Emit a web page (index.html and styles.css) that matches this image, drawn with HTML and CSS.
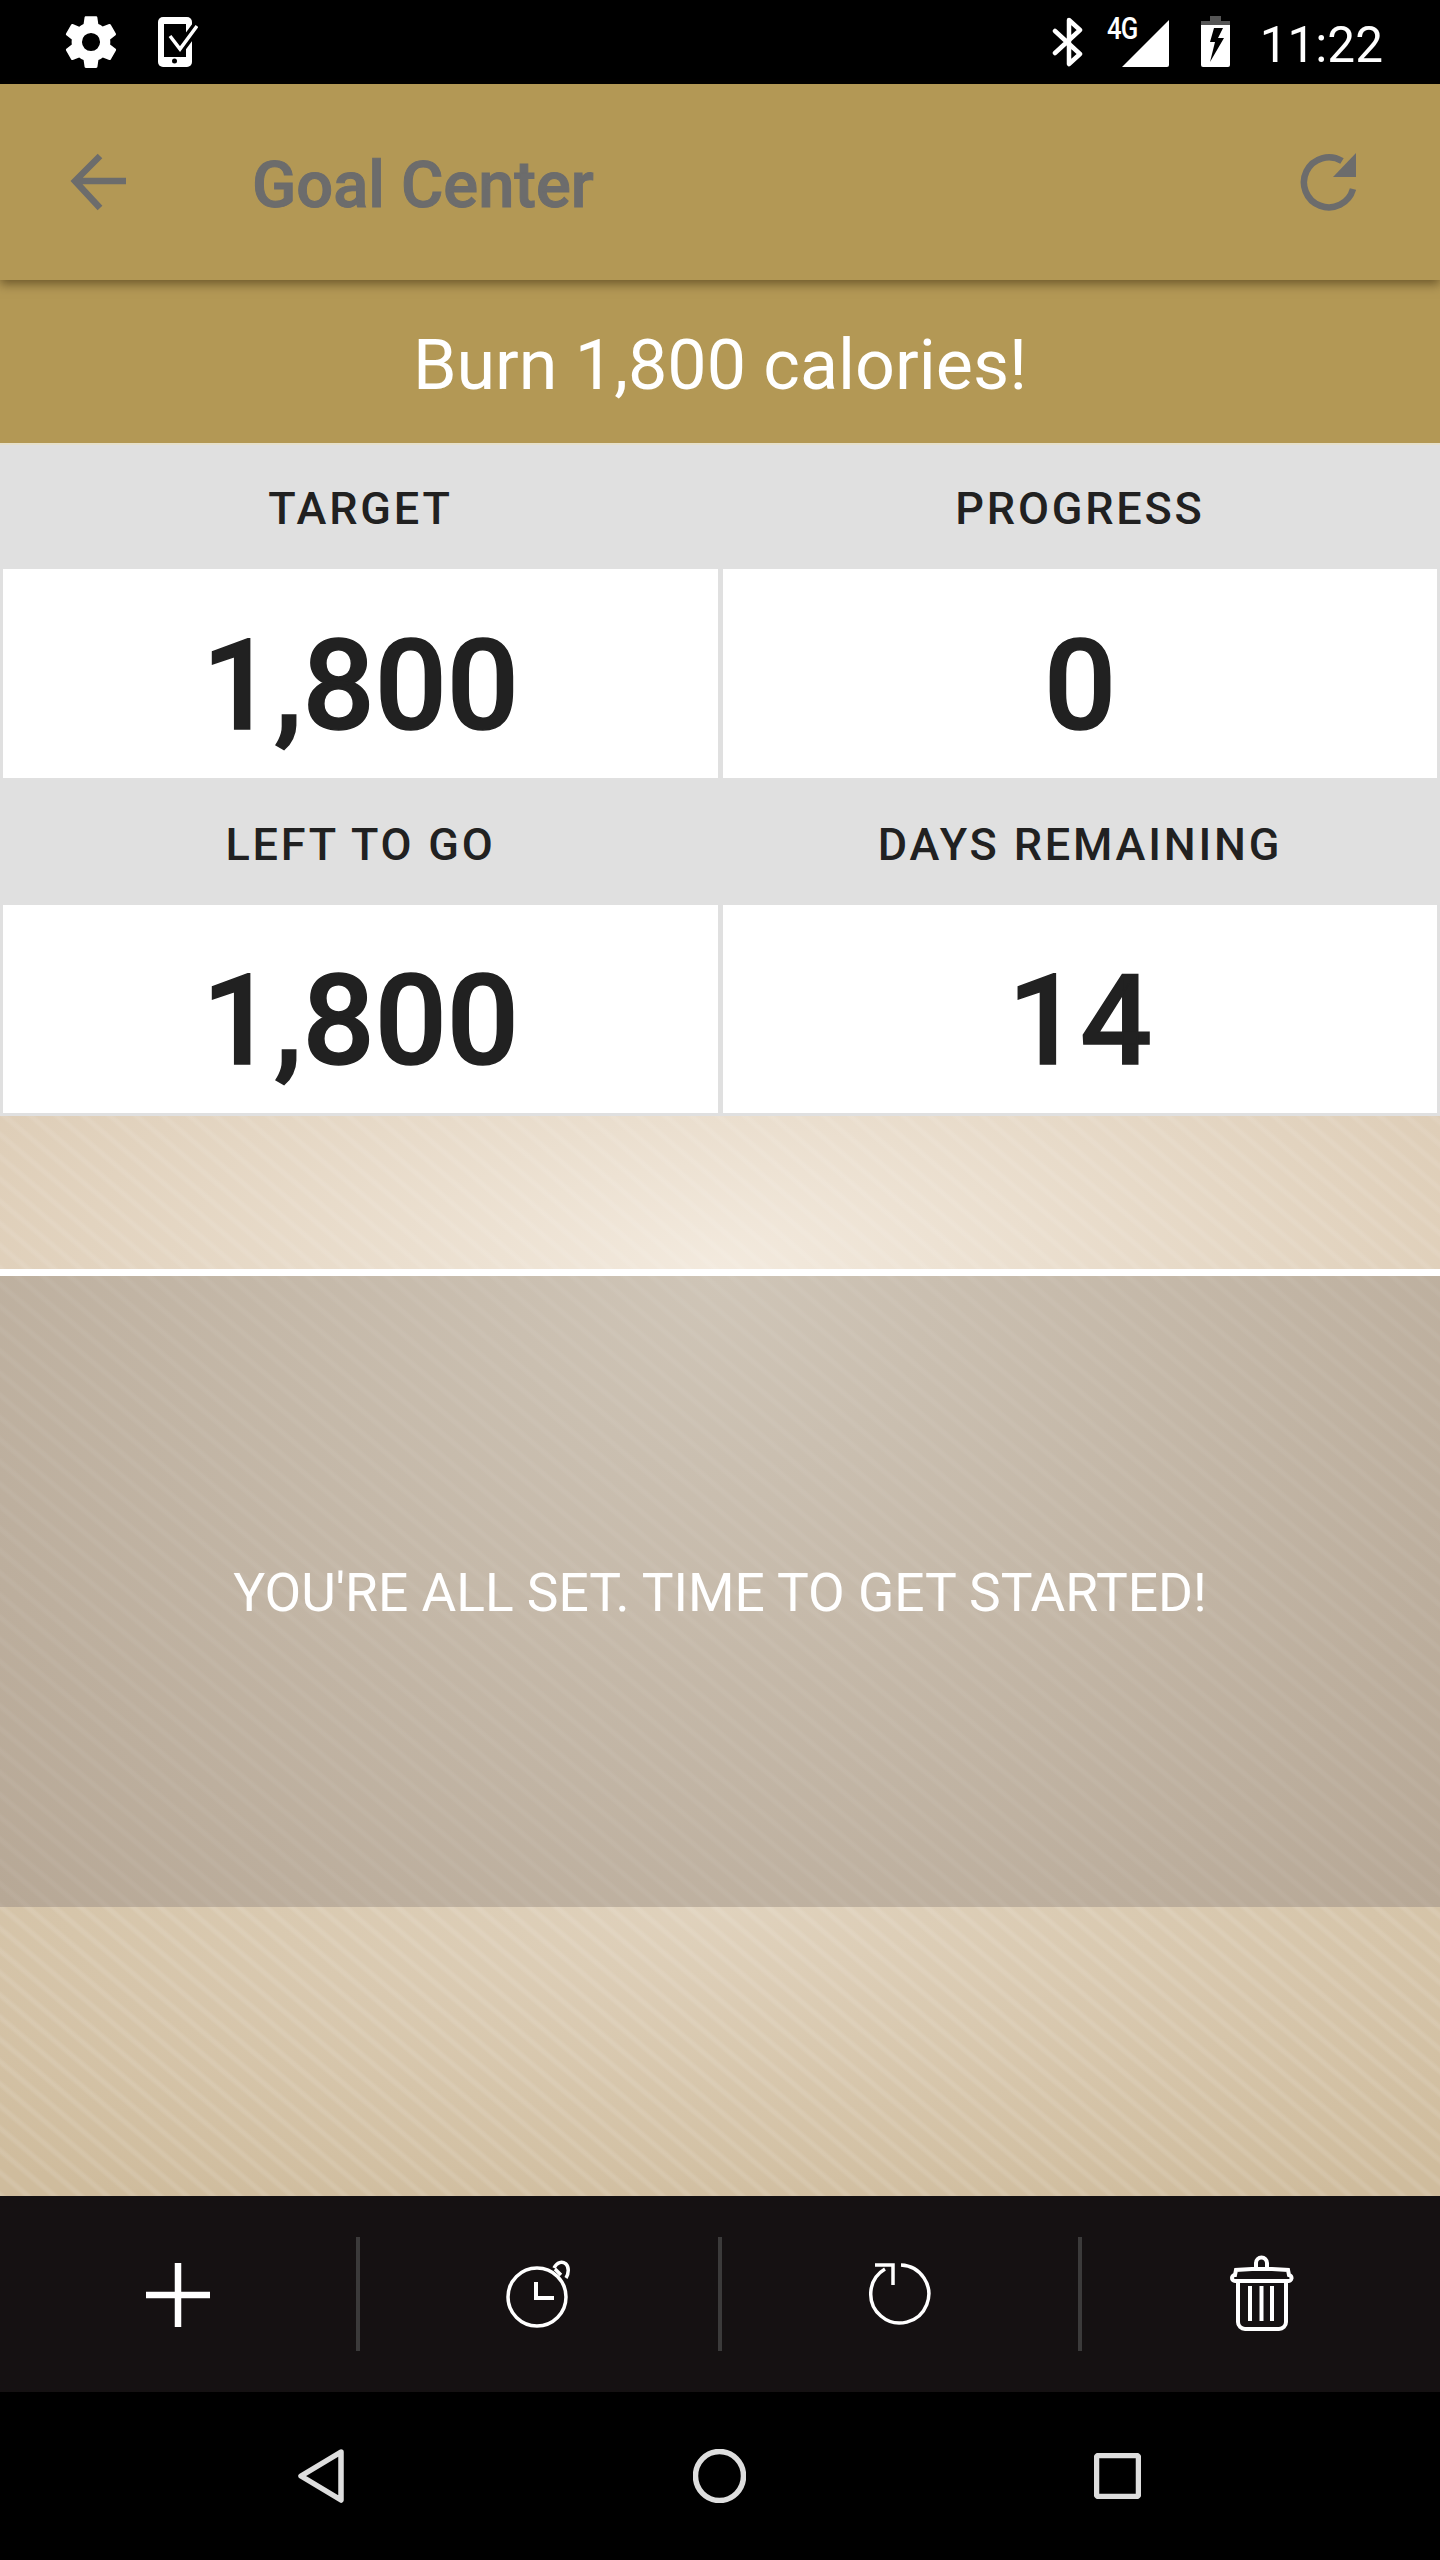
FILE: index.html
```html
<!DOCTYPE html>
<html lang="en">
<head>
    <meta charset="UTF-8">
    <meta name="viewport" content="width=device-width, initial-scale=1.0">
    <title>Goal Center</title>
    <link rel="stylesheet" href="styles.css">
</head>
<body>
    <div class="status-bar">
        <div class="status-left">
            <svg class="icon-gear" viewBox="0 0 24 24"><path fill="#fff" d="M19.4 13c.04-.32.07-.65.07-1s-.03-.68-.07-1l2.1-1.65c.19-.15.24-.42.12-.64l-2-3.46c-.12-.22-.39-.3-.61-.22l-2.49 1c-.52-.4-1.08-.73-1.69-.98l-.38-2.65A.49.49 0 0 0 14 2h-4c-.25 0-.46.18-.49.42l-.38 2.65c-.61.25-1.17.59-1.69.98l-2.49-1a.49.49 0 0 0-.61.22l-2 3.46c-.13.22-.07.49.12.64L4.57 11c-.04.32-.07.66-.07 1s.03.68.07 1l-2.11 1.65c-.19.15-.24.42-.12.64l2 3.46c.12.22.39.3.61.22l2.49-1c.52.4 1.08.73 1.69.98l.38 2.65c.03.24.24.42.49.42h4c.25 0 .46-.18.49-.42l.38-2.65c.61-.25 1.17-.59 1.69-.98l2.49 1c.23.09.49 0 .61-.22l2-3.46c.12-.22.07-.49-.12-.64L19.4 13zM12 15.500a3.500 3.500 0 1 1 0-7 3.500 3.500 0 0 1 0 7z"/></svg>
            <svg class="icon-phone" viewBox="0 0 40 50">
                <rect width="34" height="50" rx="5" fill="#fff"/>
                <rect x="6" y="7" width="22" height="33" fill="#000"/>
                <circle cx="16.500" cy="44" r="2.500" fill="#000"/>
                <path d="M12 19l10 13L39 9" fill="none" stroke="#000" stroke-width="10"/>
                <path d="M12 19l10 13L39 9" fill="none" stroke="#fff" stroke-width="3.500"/>
            </svg>
        </div>
        <div class="status-right">
            <svg class="icon-bt" viewBox="0 0 32 50"><path d="M3 14l25 23-11 10V3l11 10L3 36" fill="none" stroke="#fff" stroke-width="4.500" stroke-linecap="round" stroke-linejoin="round"/></svg>
            <div class="signal">
                <span class="signal-label">4G</span>
                <svg class="icon-signal" viewBox="0 0 47 47"><path fill="#fff" d="M47 0v45a2 2 0 0 1-2 2H0z"/></svg>
            </div>
            <svg class="icon-battery" viewBox="0 0 29 51">
                <path fill="#555" d="M9 0h11v5h9v5H0V5h9z"/>
                <path fill="#fff" d="M0 9h29v40a2 2 0 0 1-2 2H2a2 2 0 0 1-2-2z"/>
                <path fill="#000" d="M13 12h9l-5 10h6L9 46l5-20H9z"/>
            </svg>
            <span class="clock">11:22</span>
        </div>
    </div>

    <div class="toolbar">
        <svg class="icon-back" viewBox="0 0 58 58"><path d="M56 28H5M30 3L5 28l25 27" fill="none" stroke="#6c6c6c" stroke-width="6.500"/></svg>
        <h1 class="toolbar-title">Goal Center</h1>
        <svg class="icon-refresh" viewBox="0 0 58 58"><path d="M44 8A25 25 0 1 0 55 36" fill="none" stroke="#6c6c6c" stroke-width="6.500"/><path fill="#6c6c6c" d="M58 0v24H35z"/></svg>
    </div>

    <div class="goal-banner">Burn 1,800 calories!</div>

    <div class="stats">
        <div class="stat">
            <div class="stat-label">TARGET</div>
            <div class="stat-value">1,800</div>
        </div>
        <div class="stat">
            <div class="stat-label">PROGRESS</div>
            <div class="stat-value">0</div>
        </div>
        <div class="stat">
            <div class="stat-label">LEFT TO GO</div>
            <div class="stat-value">1,800</div>
        </div>
        <div class="stat">
            <div class="stat-label">DAYS REMAINING</div>
            <div class="stat-value">14</div>
        </div>
    </div>

    <div class="spacer-top"></div>
    <div class="message">YOU'RE ALL SET. TIME TO GET STARTED!</div>
    <div class="spacer-bottom"></div>

    <div class="actions">
        <div class="action">
            <svg class="action-icon" viewBox="0 0 80 80"><path d="M40 9v64M8 41h64" fill="none" stroke="#fff" stroke-width="6.500"/></svg>
        </div>
        <div class="action">
            <svg class="action-icon" viewBox="0 0 80 80"><circle cx="38" cy="43" r="29" fill="none" stroke="#fff" stroke-width="3.500"/><path d="M37 28v16h18" fill="none" stroke="#fff" stroke-width="4"/><path d="M55 14c3-6 8-7 12-4 3 3 3 9 0 14M56 15l6 6" fill="none" stroke="#fff" stroke-width="3.500"/></svg>
        </div>
        <div class="action">
            <svg class="action-icon" viewBox="0 0 80 80"><path d="M41 11A29 29 0 1 1 25 15" fill="none" stroke="#fff" stroke-width="3.500"/><path d="M15 11h18v20" fill="none" stroke="#fff" stroke-width="3.500"/></svg>
        </div>
        <div class="action">
            <svg class="action-icon" viewBox="0 0 80 80"><path d="M17 28v40a7 7 0 0 0 7 7h34a7 7 0 0 0 7-7V28M14 27h53a3 3 0 0 0 1-6l-1-5-16-1H31l-16 1-1 5a3 3 0 0 0 0 6zM35 14V9a5 5 0 0 1 11 0v5M29 32v35M40.500 32v35M51 32v35" fill="none" stroke="#fff" stroke-width="4"/></svg>
        </div>
    </div>

    <div class="nav-bar">
        <svg class="nav-back" viewBox="0 0 46 54"><path d="M43 3L3 27l40 24z" fill="none" stroke="#dedede" stroke-width="5.500" stroke-linejoin="round"/></svg>
        <svg class="nav-home" viewBox="0 0 53 54"><ellipse cx="26.500" cy="27" rx="24" ry="24.500" fill="none" stroke="#dedede" stroke-width="5.500"/></svg>
        <svg class="nav-recent" viewBox="0 0 47 46"><rect x="2.500" y="2.500" width="42" height="41" rx="2" fill="none" stroke="#dedede" stroke-width="5.500"/></svg>
    </div>
</body>
</html>
```
FILE: styles.css
```css
* {
    box-sizing: border-box;
}
body {
    margin: 0;
    width: 1440px;
    height: 2560px;
    overflow: hidden;
    font-family: Roboto, sans-serif;
    display: flex;
    flex-direction: column;
}

/* status bar */
.status-bar {
    height: 84px;
    background-color: #000;
    display: flex;
    justify-content: space-between;
    padding: 17px 57px 0 60px;
}
.status-left {
    display: flex;
    gap: 36px;
}
.icon-gear {
    width: 62px;
    height: 62px;
    margin-top: -6px;
}
.icon-phone {
    width: 40px;
    height: 50px;
}
.status-right {
    display: flex;
    align-items: flex-start;
}
.icon-bt {
    width: 32px;
    height: 50px;
    margin-right: 23px;
}
.signal {
    position: relative;
    width: 62px;
    height: 50px;
    margin-right: 32px;
}
.signal-label {
    position: absolute;
    left: 0;
    top: 0;
    color: #fff;
    font-size: 31px;
    font-weight: 500;
    line-height: 24px;
    letter-spacing: -1px;
    transform: scaleX(0.83);
    transform-origin: left top;
}
.icon-signal {
    position: absolute;
    right: 0;
    top: 3px;
    width: 47px;
    height: 47px;
}
.icon-battery {
    width: 29px;
    height: 51px;
    margin-top: -1px;
    margin-right: 30px;
}
.clock {
    color: #fff;
    font-size: 49.500px;
    line-height: 56px;
}

/* toolbar */
.toolbar {
    height: 196px;
    background-color: #b39855;
    display: flex;
    align-items: center;
    padding-left: 70px;
    padding-right: 84px;
    position: relative;
    box-shadow: 0 4px 10px rgba(40, 25, 0, 0.5);
}
.icon-back {
    width: 58px;
    height: 58px;
}
.toolbar-title {
    flex: 1;
    margin: 0 0 0 124px;
    padding-top: 6px;
    color: #6c6c6c;
    font-size: 65px;
    font-weight: 500;
    -webkit-text-stroke: 1px #6c6c6c;
}
.icon-refresh {
    width: 58px;
    height: 58px;
}
.goal-banner {
    height: 163px;
    background-color: #b39855;
    color: #fff;
    font-size: 70px;
    display: flex;
    align-items: center;
    justify-content: center;
    padding-top: 6px;
}

/* stat grid */
.stats {
    display: grid;
    grid-template-columns: 1fr 1fr;
    grid-template-rows: 335px 338px;
}
.stat {
    background-color: #e0e0e0;
    display: flex;
    flex-direction: column;
    padding: 0 3px 0;
}
.stat:nth-child(odd) {
    padding-right: 2px;
}
.stat:nth-child(even) {
    padding-left: 3px;
}
.stat:nth-child(-n+2) {
    border-top: 2px solid #e6e0cb;
}
.stat:nth-child(n+3) {
    padding-bottom: 3px;
}
.stat-label {
    height: 127px;
    flex-shrink: 0;
    display: flex;
    align-items: center;
    justify-content: center;
    padding-top: 6px;
    color: #212121;
    font-size: 45px;
    font-weight: 500;
    letter-spacing: 2.800px;
}
.stat:nth-child(-n+2) .stat-label {
    height: 124px;
    padding-top: 3px;
}
.stat-value {
    flex: 1;
    background-color: #fff;
    display: flex;
    align-items: center;
    justify-content: center;
    padding-top: 23px;
    color: #212121;
    font-size: 127px;
    font-weight: 500;
    -webkit-text-stroke: 1.500px #212121;
}

/* textured panels */
.spacer-top {
    height: 153px;
    background:
        repeating-linear-gradient(40deg, rgba(255, 255, 255, 0.09) 0 2px, transparent 5px 14px, rgba(255, 255, 255, 0.09) 17px),
        radial-gradient(ellipse 860px 400px at 50% 100%, #f3eade, #dccbb4);
}
.message {
    height: 638px;
    border-top: 7px solid #fff;
    display: flex;
    align-items: center;
    justify-content: center;
    padding-top: 3px;
    color: #fff;
    font-size: 53.300px;
    background:
        repeating-linear-gradient(40deg, rgba(255, 255, 255, 0.05) 0 2px, transparent 5px 14px, rgba(255, 255, 255, 0.05) 17px),
        radial-gradient(ellipse 1000px 900px at 50% 0%, #cfc5b7, #b7a896);
}
.spacer-bottom {
    height: 289px;
    background:
        repeating-linear-gradient(40deg, rgba(255, 255, 255, 0.11) 0 2px, transparent 5px 14px, rgba(255, 255, 255, 0.11) 17px),
        radial-gradient(ellipse 1100px 340px at 50% 0%, #e0d2bd, #cfbc9d);
}

/* bottom action bar */
.actions {
    height: 196px;
    background-color: #151112;
    display: grid;
    grid-template-columns: 360px 362px 360px 358px;
    padding-top: 41px;
    padding-bottom: 41px;
}
.action {
    display: flex;
    align-items: center;
    justify-content: center;
    border-right: 4px solid #3b3a3a;
}
.action:last-child {
    border-right: none;
}
.action-icon {
    width: 80px;
    height: 80px;
}

/* system nav */
.nav-bar {
    height: 168px;
    background-color: #000;
    display: flex;
    align-items: center;
    padding-left: 298px;
}
.nav-back {
    width: 46px;
    height: 54px;
}
.nav-home {
    width: 53px;
    height: 54px;
    margin-left: 349px;
}
.nav-recent {
    width: 47px;
    height: 46px;
    margin-left: 348px;
}
```
